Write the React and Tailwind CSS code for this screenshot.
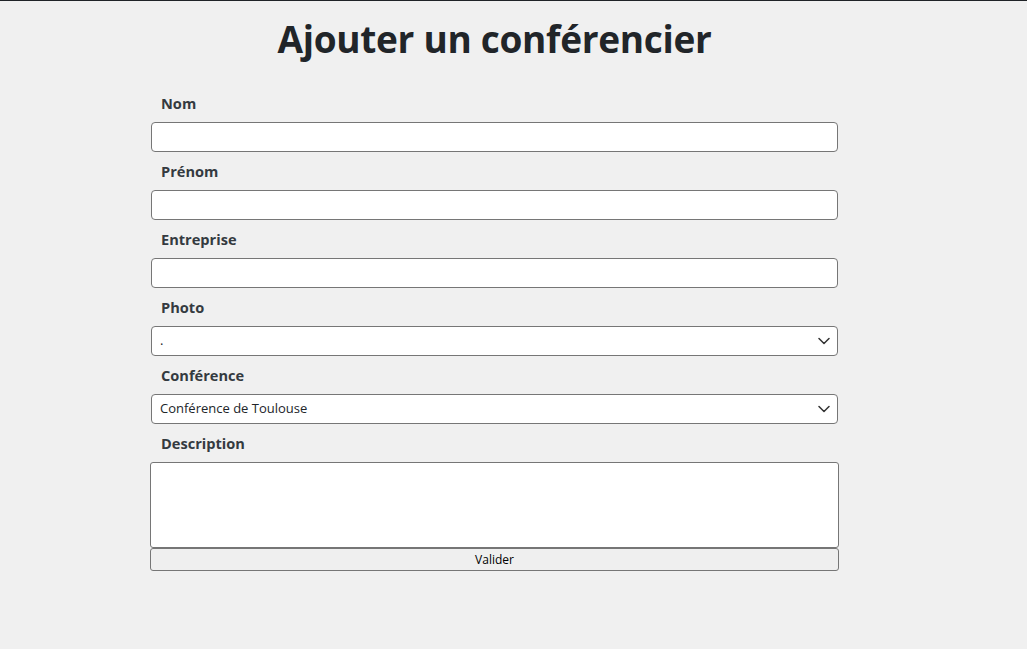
import React from "react";

const labelCls = "h-[38px] flex items-center pl-[10px] pt-[2px] text-[14.6px] font-bold text-[#343a40]";
const inputCls = "block w-full h-[30px] bg-white border border-[#767676] rounded-[4px] px-2 text-[13px] text-[#212529] outline-none";

function Chevron() {
    return (
        <svg className="absolute right-[8px] top-1/2 -translate-y-1/2 pointer-events-none" width="12" height="8" viewBox="0 0 12 8" fill="none">
            <path d="M1 1.5L6 6.5L11 1.5" stroke="#333" strokeWidth="1.5" strokeLinecap="round" strokeLinejoin="round" />
        </svg>
    );
}

function Field(props) {
    return (
        <div>
            <div className={labelCls}>{props.label}</div>
            {props.children}
        </div>
    );
}

class App extends React.Component {
    render = () => {
        return (
            <div className="min-h-[649px] bg-[#f0f0f0] border-t border-[#1f2327] text-[#212529]" style={{ fontFamily: '"Open Sans", "Noto Sans", sans-serif' }}>
                <div className="ml-[151px] w-[687px]">
                    <h1 className="h-[83px] flex items-center justify-center text-[37px] font-bold tracking-[-0.3px] text-[#212529] pb-[8px]">
                        Ajouter un conférencier
                    </h1>
                    <form>
                        <Field label="Nom">
                            <input type="text" className={inputCls} />
                        </Field>
                        <Field label="Prénom">
                            <input type="text" className={inputCls} />
                        </Field>
                        <Field label="Entreprise">
                            <input type="text" className={inputCls} />
                        </Field>
                        <Field label="Photo">
                            <div className="relative">
                                <select className={inputCls + " appearance-none"} defaultValue=".">
                                    <option value=".">.</option>
                                </select>
                                <Chevron />
                            </div>
                        </Field>
                        <Field label="Conférence">
                            <div className="relative">
                                <select className={inputCls + " appearance-none"} defaultValue="toulouse">
                                    <option value="toulouse">Conférence de Toulouse</option>
                                </select>
                                <Chevron />
                            </div>
                        </Field>
                        <Field label="Description">
                            <textarea className="block -mx-px w-[689px] h-[86px] bg-white border border-[#767676] rounded-[3px] resize-none outline-none" />
                        </Field>
                        <button type="button" className="block -mx-px w-[689px] h-[23px] bg-[#efefef] border border-[#767676] rounded-[3px] text-[12px] text-black leading-none pt-px">
                            Valider
                        </button>
                    </form>
                </div>
            </div>
        );
    }
}

export default App;
